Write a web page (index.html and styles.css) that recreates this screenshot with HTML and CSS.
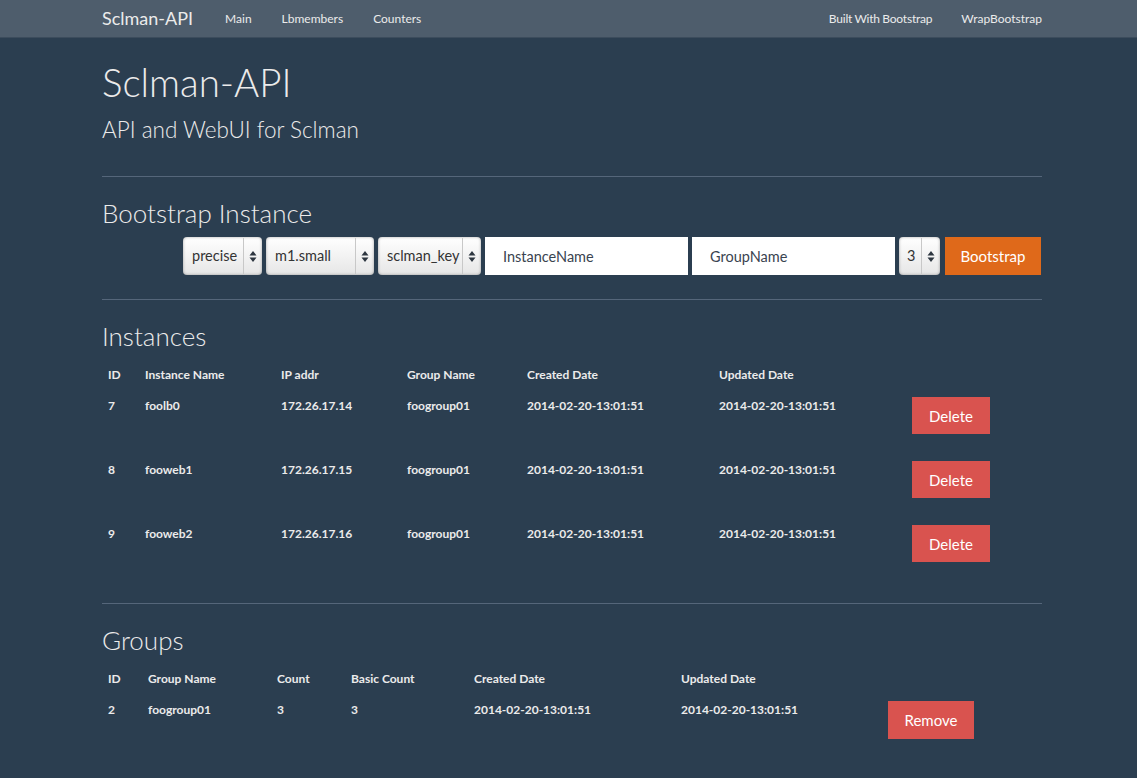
FILE: index.html
```html
<!DOCTYPE html>
<html>
<head>
<meta charset="utf-8">
<title>Sclman-API</title>
<link rel="stylesheet" href="styles.css">
</head>
<body>
<nav class="navbar">
  <div class="nav-inner">
    <a class="brand">Sclman-API</a>
    <ul class="nav">
      <li>Main</li>
      <li>Lbmembers</li>
      <li>Counters</li>
    </ul>
    <ul class="nav nav-right">
      <li class="tight">Built With Bootstrap</li>
      <li>WrapBootstrap</li>
    </ul>
  </div>
</nav>
<div class="container">
  <header class="page-header">
    <h1>Sclman-API</h1>
    <p class="lead">API and WebUI for Sclman</p>
  </header>
  <hr class="hr-top">
  <section>
    <h2>Bootstrap Instance</h2>
    <form class="form-inline">
      <div class="select w-precise"><span class="val">precise</span><span class="arrows"><svg width="8" height="13" viewBox="0 0 8 13"><path d="M4 1 L7.5 5.5 L0.5 5.5 Z M4 12 L7.5 7.5 L0.5 7.5 Z" fill="#2d3640"/></svg></span></div>
      <div class="select w-flavor"><span class="val">m1.small</span><span class="arrows"><svg width="8" height="13" viewBox="0 0 8 13"><path d="M4 1 L7.5 5.5 L0.5 5.5 Z M4 12 L7.5 7.5 L0.5 7.5 Z" fill="#2d3640"/></svg></span></div>
      <div class="select w-key"><span class="val">sclman_key</span><span class="arrows"><svg width="8" height="13" viewBox="0 0 8 13"><path d="M4 1 L7.5 5.5 L0.5 5.5 Z M4 12 L7.5 7.5 L0.5 7.5 Z" fill="#2d3640"/></svg></span></div>
      <input class="input" type="text" placeholder="InstanceName">
      <input class="input" type="text" placeholder="GroupName">
      <div class="select w-num"><span class="val">3</span><span class="arrows"><svg width="8" height="13" viewBox="0 0 8 13"><path d="M4 1 L7.5 5.5 L0.5 5.5 Z M4 12 L7.5 7.5 L0.5 7.5 Z" fill="#2d3640"/></svg></span></div>
      <button type="button" class="btn btn-warning">Bootstrap</button>
    </form>
  </section>
  <hr class="hr-form">
  <section>
    <h2>Instances</h2>
    <table class="table t-instances">
      <thead>
        <tr><th>ID</th><th>Instance Name</th><th>IP addr</th><th>Group Name</th><th>Created Date</th><th>Updated Date</th><th></th></tr>
      </thead>
      <tbody>
        <tr><td>7</td><td>foolb0</td><td>172.26.17.14</td><td>foogroup01</td><td>2014-02-20-13:01:51</td><td>2014-02-20-13:01:51</td><td><button type="button" class="btn btn-danger del">Delete</button></td></tr>
        <tr><td>8</td><td>fooweb1</td><td>172.26.17.15</td><td>foogroup01</td><td>2014-02-20-13:01:51</td><td>2014-02-20-13:01:51</td><td><button type="button" class="btn btn-danger del">Delete</button></td></tr>
        <tr><td>9</td><td>fooweb2</td><td>172.26.17.16</td><td>foogroup01</td><td>2014-02-20-13:01:51</td><td>2014-02-20-13:01:51</td><td><button type="button" class="btn btn-danger del">Delete</button></td></tr>
      </tbody>
    </table>
  </section>
  <hr class="hr-groups">
  <section>
    <h2>Groups</h2>
    <table class="table t-groups">
      <thead>
        <tr><th>ID</th><th>Group Name</th><th>Count</th><th>Basic Count</th><th>Created Date</th><th>Updated Date</th><th></th></tr>
      </thead>
      <tbody>
        <tr><td>2</td><td>foogroup01</td><td>3</td><td>3</td><td>2014-02-20-13:01:51</td><td>2014-02-20-13:01:51</td><td><button type="button" class="btn btn-danger rem">Remove</button></td></tr>
      </tbody>
    </table>
  </section>
</div>
</body>
</html>
```

FILE: styles.css
```css
* { box-sizing: border-box; }
html, body { margin: 0; padding: 0; }
body {
  background: #2b3e50;
  color: #ebebeb;
  font-family: Lato, "Open Sans", "Liberation Sans", sans-serif;
  font-size: 13px;
  line-height: 20px;
  height: 778px;
  overflow: hidden;
}

.navbar {
  height: 38px;
  background: #4e5d6c;
  border-bottom: 1px solid #3c4c5c;
}
.nav-inner {
  width: 940px;
  margin-left: 102px;
  display: flex;
  align-items: center;
  height: 37px;
}
.brand {
  font-size: 18px;
  color: #ebebeb;
  margin-right: 32px;
  line-height: 37px;
}
.nav {
  list-style: none;
  margin: 0;
  padding: 0;
  display: flex;
  gap: 30px;
  font-size: 12px;
  color: #ebebeb;
}
.nav-right { margin-left: auto; gap: 29px; }
.tight { letter-spacing: -0.2px; word-spacing: -0.5px; }

.container {
  width: 940px;
  margin-left: 102px;
}

h1 {
  font-weight: 300;
  font-size: 38.5px;
  line-height: 44px;
  margin: 0;
  padding-top: 22px;
}
.lead {
  font-size: 22.5px;
  font-weight: 300;
  line-height: 30px;
  margin: 11px 0 0;
}
hr {
  border: 0;
  border-top: 1px solid #55667a;
  height: 0;
  margin: 0;
}
.hr-top { margin-top: 31px; }
.hr-form { margin-top: 24px; }
.hr-groups { margin-top: 23px; }

h2 {
  font-weight: 300;
  font-size: 26px;
  line-height: 32px;
  margin: 20px 0 0;
}

.form-inline {
  display: flex;
  margin: 8px 0 0 81px;
  gap: 4px;
  height: 38px;
  align-items: stretch;
}
.select {
  display: flex;
  align-items: stretch;
  height: 38px;
  background: linear-gradient(#ffffff, #e6e6e6);
  border-radius: 4px;
  color: #333;
  font-size: 14.5px;
  box-shadow: inset 0 0 3px rgba(0,0,0,0.35);
}
.select .val {
  flex: 1;
  display: flex;
  align-items: center;
  padding-left: 9px;
  white-space: nowrap;
}
.select .arrows {
  width: 19px;
  border-left: 1px solid #c8c8c8;
  display: flex;
  align-items: center;
  justify-content: center;
  margin: 1px 0;
}
.w-precise { width: 79px; }
.w-flavor { width: 108px; }
.w-key { width: 103px; }
.w-num { width: 41px; }
.w-num .val { padding-left: 8px; }
.input {
  width: 203px;
  height: 38px;
  border: 0;
  background: #fff;
  font-family: inherit;
  font-size: 14.5px;
  padding: 0 18px;
  color: #333;
  margin: 0;
}
.input::placeholder { color: #3a4450; opacity: 1; }

.btn {
  font-family: inherit;
  border: 0;
  border-radius: 0;
  color: #fff;
  font-size: 15px;
  padding: 0;
  cursor: pointer;
}
.btn-warning {
  background: #df691a;
  width: 96px;
  height: 38px;
  margin-left: 1px;
}
.btn-danger { background: #d9534f; }
.del { width: 78px; height: 37px; margin-top: 1px; }
.rem { width: 86px; height: 38px; margin-top: 1px; }

.table {
  border-collapse: collapse;
  width: 940px;
  margin-top: 5px;
  font-size: 12px;
  font-weight: 700;
}
.table th, .table td {
  text-align: left;
  vertical-align: top;
  padding: 8px 6px;
  line-height: 20px;
}
.table thead th { padding-bottom: 3px; height: 31px; }
.table tbody td { height: 64px; padding-top: 8px; }

.t-instances th:nth-child(1) { width: 37px; }
.t-instances th:nth-child(2) { width: 136px; }
.t-instances th:nth-child(3) { width: 126px; }
.t-instances th:nth-child(4) { width: 120px; }
.t-instances th:nth-child(5) { width: 192px; }
.t-instances th:nth-child(6) { width: 193px; }

.t-groups th:nth-child(1) { width: 40px; }
.t-groups th:nth-child(2) { width: 129px; }
.t-groups th:nth-child(3) { width: 74px; }
.t-groups th:nth-child(4) { width: 123px; }
.t-groups th:nth-child(5) { width: 207px; }
.t-groups th:nth-child(6) { width: 207px; }
```
